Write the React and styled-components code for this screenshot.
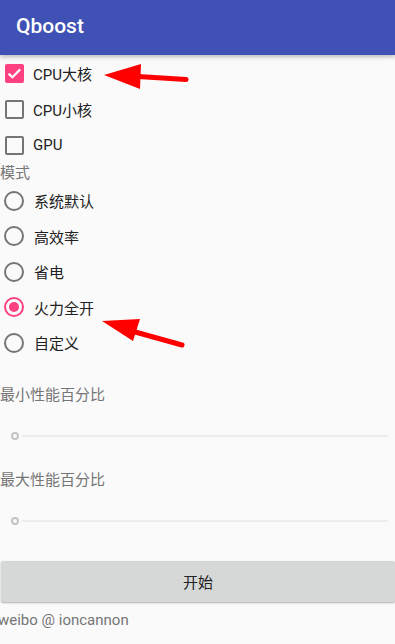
import React from "react";
import styled, { createGlobalStyle } from "styled-components";

const Global = createGlobalStyle`
  html, body { margin: 0; padding: 0; background: #fafafa; }
  body { font-family: Roboto, "Noto Sans CJK SC", sans-serif; }
`;

const Page = styled.div`
  position: relative;
  width: 395px;
  height: 644px;
  overflow: hidden;
  background: #fafafa;
`;

const AppBar = styled.header`
  height: 55px;
  background: #3f51b5;
  display: flex;
  align-items: center;
  padding-left: 16px;
  box-shadow: 0 2px 4px rgba(0, 0, 0, 0.25);
  position: relative;
  z-index: 1;
`;

const Title = styled.h1`
  margin: 0;
  color: #fff;
  font: 500 21px Roboto, sans-serif;
  margin-top: -3px;
`;

const Content = styled.main`
  display: flex;
  flex-direction: column;
`;

const Row = styled.label`
  height: ${(p) => p.h || 36}px;
  display: flex;
  align-items: center;
  gap: 9px;
  padding-left: 5px;
  font-size: 15px;
  color: #212121;
`;

const Box = styled.span`
  box-sizing: border-box;
  width: 19px;
  height: 19px;
  border-radius: 2px;
  display: flex;
  align-items: center;
  justify-content: center;
  background: ${(p) => (p.checked ? "#ff4081" : "transparent")};
  border: ${(p) => (p.checked ? "none" : "2px solid #757575")};
`;

const Radio = styled.span`
  box-sizing: border-box;
  width: 20px;
  height: 20px;
  margin-left: -1px;
  margin-right: 1px;
  border-radius: 50%;
  border: 2px solid ${(p) => (p.checked ? "#ff4081" : "#757575")};
  display: flex;
  align-items: center;
  justify-content: center;
  &::after {
    content: "";
    width: 10px;
    height: 10px;
    border-radius: 50%;
    background: ${(p) => (p.checked ? "#ff4081" : "transparent")};
  }
`;

const Caption = styled.div`
  font-size: 15px;
  line-height: 20px;
  color: #757575;
  margin-top: ${(p) => p.top || 0}px;
`;

const Slider = styled.div`
  height: 62px;
  display: flex;
  align-items: center;
  padding-left: 11px;
  padding-right: 7px;
  gap: 3px;
`;

const Thumb = styled.span`
  box-sizing: border-box;
  width: 8px;
  height: 8px;
  border-radius: 50%;
  border: 2px solid #c4c4c4;
  background: #fafafa;
`;

const Track = styled.span`
  flex: 1;
  height: 2px;
  background: #ececec;
`;

const Button = styled.button`
  margin: 9px 0 0 1px;
  height: 41px;
  border: none;
  border-radius: 2px;
  background: #d6d7d7;
  box-shadow: 0 1px 2px rgba(0, 0, 0, 0.3);
  font: 15px Roboto, "Noto Sans CJK SC", sans-serif;
  color: #212121;
`;

const Footer = styled.div`
  margin-top: 8px;
  margin-left: -2px;
  font-size: 15px;
  line-height: 20px;
  color: #757575;
`;

const Overlay = styled.svg`
  position: absolute;
  left: 0;
  top: 0;
  pointer-events: none;
`;

const Check = () => (
  <svg width="19" height="19" viewBox="0 0 19 19">
    <path d="M3.6 9.6 L7.4 13.2 L15.2 5.4" fill="none" stroke="#fff" strokeWidth="2.2" />
  </svg>
);

const checks = [
  ["CPU大核", true],
  ["CPU小核", false],
  ["GPU", false],
];
const modes = ["系统默认", "高效率", "省电", "火力全开", "自定义"];

export default function App() {
  return (
    <Page>
      <Global />
      <AppBar>
        <Title>Qboost</Title>
      </AppBar>
      <Content>
        {checks.map(([t, c]) => (
          <Row key={t}>
            <Box checked={c}>{c && <Check />}</Box>
            {t}
          </Row>
        ))}
        <Caption>模式</Caption>
        {modes.map((m) => (
          <Row key={m} h={35.5}>
            <Radio checked={m === "火力全开"} />
            {m}
          </Row>
        ))}
        <Caption top={24}>最小性能百分比</Caption>
        <Slider>
          <Thumb />
          <Track />
        </Slider>
        <Caption top={3}>最大性能百分比</Caption>
        <Slider>
          <Thumb />
          <Track />
        </Slider>
        <Button>开始</Button>
        <Footer>weibo @ ioncannon</Footer>
      </Content>
      <Overlay width="395" height="644" viewBox="0 0 395 644">
        <line x1="138" y1="76.5" x2="186" y2="79.5" stroke="#ff0000" strokeWidth="5" strokeLinecap="round" />
        <polygon points="104,75 141,64 140,89" fill="#ff0000" />
        <line x1="128" y1="330" x2="182" y2="345" stroke="#ff0000" strokeWidth="5" strokeLinecap="round" />
        <polygon points="102,321 140,319 133,341" fill="#ff0000" />
      </Overlay>
    </Page>
  );
}
